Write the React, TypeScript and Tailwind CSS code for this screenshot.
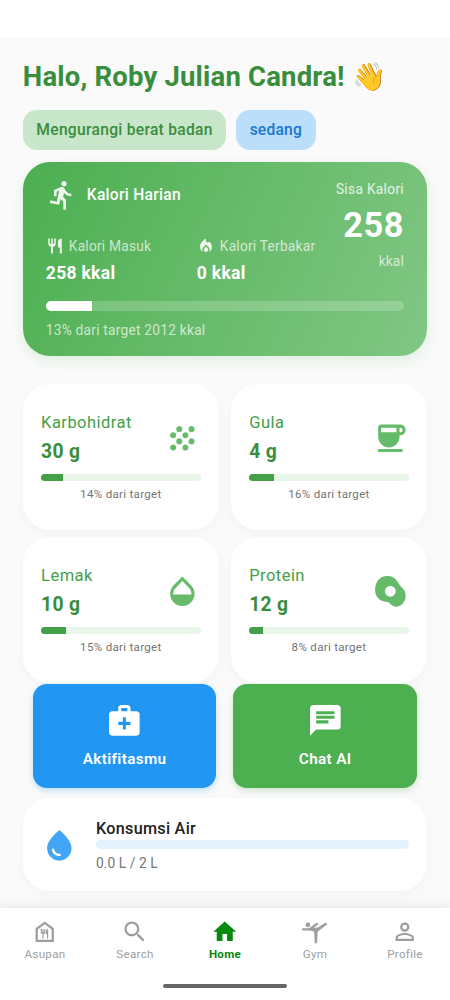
import React from "react";
import type { IconType } from "react-icons";
import {
  MdChat,
  MdCoffee,
  MdDirectionsRun,
  MdEggAlt,
  MdGrain,
  MdHome,
  MdLocalFireDepartment,
  MdMedicalServices,
  MdOpacity,
  MdOutlineFoodBank,
  MdPersonOutline,
  MdRestaurant,
  MdSearch,
  MdSportsGymnastics,
  MdWaterDrop,
} from "react-icons/md";

type Nutrient = { label: string; value: string; note: string; fill: number; icon: IconType };

const nutrients: Nutrient[] = [
  { label: "Karbohidrat", value: "30 g", note: "14% dari target", fill: 14, icon: MdGrain },
  { label: "Gula", value: "4 g", note: "16% dari target", fill: 15.8, icon: MdCoffee },
  { label: "Lemak", value: "10 g", note: "15% dari target", fill: 15.5, icon: MdOpacity },
  { label: "Protein", value: "12 g", note: "8% dari target", fill: 8.4, icon: MdEggAlt },
];

const tabs: { label: string; icon: IconType; active?: boolean }[] = [
  { label: "Asupan", icon: MdOutlineFoodBank },
  { label: "Search", icon: MdSearch },
  { label: "Home", icon: MdHome, active: true },
  { label: "Gym", icon: MdSportsGymnastics },
  { label: "Profile", icon: MdPersonOutline },
];

function Stat({ icon: Icon, label, value }: { icon: IconType; label: string; value: string }) {
  return (
    <div>
      <div className="flex items-center gap-[5px]">
        <Icon className="size-[18px] text-white/90" />
        <span className="text-[13.75px] leading-[20px] tracking-[0.22px] text-white/70">{label}</span>
      </div>
      <div className="mt-[4px] text-[17.5px] leading-[26px] font-bold tracking-[0.3px]">{value}</div>
    </div>
  );
}

function CalorieCard() {
  return (
    <section className="mt-[12px] h-[194px] rounded-[27px] bg-[linear-gradient(115.6deg,#4caf50,#81c784)] px-[23px] pt-[17px] text-white shadow-[0_5px_14px_rgba(76,175,80,0.15)]">
      <div className="flex justify-between">
        <div>
          <div className="flex items-center gap-[9px]">
            <MdDirectionsRun className="size-[32px] text-white/90" />
            <span className="text-[15.6px] leading-[20px] font-medium tracking-[0.28px]">Kalori Harian</span>
          </div>
          <div className="mt-[25px] grid w-[270px] grid-cols-[151px_1fr]">
            <Stat icon={MdRestaurant} label="Kalori Masuk" value="258 kkal" />
            <Stat icon={MdLocalFireDepartment} label="Kalori Terbakar" value="0 kkal" />
          </div>
        </div>
        <div className="-ml-[20px] shrink-0 text-right">
          <div className="text-[13.75px] leading-[20px] tracking-[0.3px] text-white/80">Sisa Kalori</div>
          <div className="mt-[6px] text-[34.4px] leading-[40px] font-bold tracking-[0.5px]">258</div>
          <div className="mt-[6px] text-[13.75px] leading-[20px] tracking-[0.15px] text-white/70">kkal</div>
        </div>
      </div>
      <div className="mt-[15px] h-[9.5px] overflow-hidden rounded-full bg-white/20">
        <div className="h-full w-[12.8%] bg-white" />
      </div>
      <div className="mt-[9px] text-[13.75px] leading-[20px] tracking-[0.22px] text-white/70">
        13% dari target 2012 kkal
      </div>
    </section>
  );
}

function NutrientCard({ label, value, note, fill, icon: Icon }: Nutrient) {
  return (
    <div className="h-[145.5px] rounded-[27px] bg-white px-[18.3px] pt-[27.5px] shadow-[0_4px_12px_rgba(0,0,0,0.03)]">
      <div className="flex items-center justify-between">
        <div>
          <div className="text-[16.5px] leading-[22px] tracking-[0.46px] text-[#43a047]">{label}</div>
          <div className="mt-[4px] text-[19.3px] leading-[28px] font-bold tracking-[0.3px] text-[#388e3c]">
            {value}
          </div>
        </div>
        <Icon className="size-[36.7px] text-[#66bb6a]" />
      </div>
      <div className="mt-[8px] h-[7.5px] overflow-hidden rounded-full bg-[#e8f5e9]">
        <div className="h-full bg-[#43a047]" style={{ width: `${fill}%` }} />
      </div>
      <div className="mt-[4.5px] text-center text-[11.6px] leading-[16px] tracking-[0.28px] text-[#757575]">{note}</div>
    </div>
  );
}

export default function App() {
  return (
    <div className="flex h-[1000px] w-[450px] flex-col overflow-hidden bg-[#fafafa] font-['Roboto',sans-serif]">
      <div className="h-[39px] shrink-0 bg-white" />
      <main className="flex-1 pt-[21px] pr-[23px] pl-[22.8px]">
        <h1 className="text-[27.5px] leading-[33px] font-bold tracking-[0.18px] whitespace-nowrap text-[#388e3c]">
          Halo, Roby Julian Candra! 👋
        </h1>
        <div className="mt-[17px] flex gap-[9.5px]">
          <span className="flex h-[40px] w-[203.5px] items-center justify-center rounded-[14px] bg-[#c8e6c9] text-[15.6px] leading-[20px] font-medium tracking-[0.29px] text-[#388e3c]">
            Mengurangi berat badan
          </span>
          <span className="flex h-[40px] w-[80px] items-center justify-center rounded-[14px] bg-[#bbdefb] text-[15.6px] leading-[20px] font-medium tracking-[0.2px] text-[#1976d2]">
            sedang
          </span>
        </div>
        <CalorieCard />
        <section className="mt-[28px] grid grid-cols-2 gap-x-[12px] gap-y-[7.7px]">
          {nutrients.map((n) => (
            <NutrientCard key={n.label} {...n} />
          ))}
        </section>
        <section className="mt-[1.3px] grid grid-cols-2 gap-[17px] px-[10px] text-[15.3px] leading-[20px] font-semibold tracking-[0.35px] text-white">
          <button className="flex h-[104px] flex-col items-center rounded-[14px] bg-[#2196f3] pt-[18px] shadow-[0_3px_6px_rgba(33,150,243,0.25)]">
            <MdMedicalServices className="size-[36.7px]" />
            <span className="mt-[10px]">Aktifitasmu</span>
          </button>
          <button className="flex h-[104px] flex-col items-center rounded-[14px] bg-[#4caf50] pt-[18px] shadow-[0_3px_6px_rgba(76,175,80,0.25)]">
            <MdChat className="size-[36.7px]" />
            <span className="mt-[10px]">Chat AI</span>
          </button>
        </section>
        <section className="mt-[10px] flex h-[93.5px] items-center gap-[18.3px] rounded-[27px] bg-white pt-[1px] pr-[18.5px] pl-[18.2px] shadow-[0_4px_12px_rgba(0,0,0,0.03)]">
          <MdWaterDrop className="size-[36.7px] shrink-0 text-[#42a5f5]" />
          <div className="flex-1">
            <div className="mt-[1px] text-[16.2px] leading-[22px] font-medium tracking-[0.28px] text-[#212121]">
              Konsumsi Air
            </div>
            <div className="h-[9px] rounded-full bg-[#e3f2fd]" />
            <div className="mt-[3.5px] text-[13.75px] leading-[20px] tracking-[0.08px] text-[#757575]">0.0 L / 2 L</div>
          </div>
        </section>
      </main>
      <nav className="flex h-[92px] shrink-0 flex-col bg-white pt-[10px] shadow-[0_-2px_10px_rgba(0,0,0,0.08)]">
        <div className="grid grid-cols-5">
          {tabs.map(({ label, icon: Icon, active }) => (
            <div
              key={label}
              className={
                active
                  ? "flex flex-col items-center font-bold text-[#068a0e]"
                  : "flex flex-col items-center text-[#9e9e9e]"
              }
            >
              <Icon className="size-[27.5px]" />
              <span className="text-[11.6px] leading-[16px] tracking-[0.3px]">{label}</span>
            </div>
          ))}
        </div>
        <div className="mt-auto mb-[12px] h-[4px] w-[123.5px] self-center rounded-full bg-[#666666]" />
      </nav>
    </div>
  );
}
